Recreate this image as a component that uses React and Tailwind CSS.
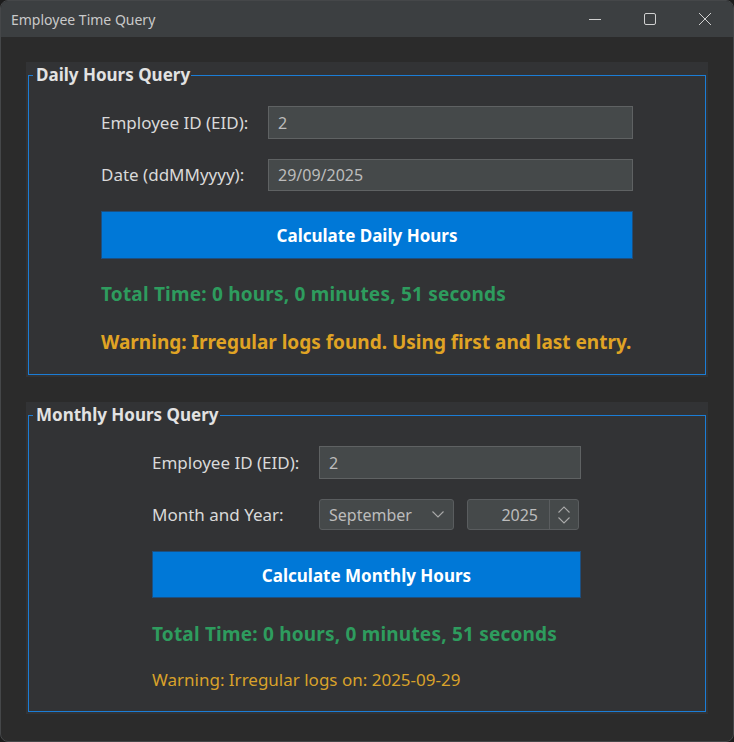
import React from "react";

const font = "font-['Noto_Sans',sans-serif]";

function TextBox({ value, h = "h-[33px]" }) {
  return (
    <div className={`${h} w-full bg-[#45494a] border border-[#5f6263] flex items-center pl-[9px] text-[16px] text-[#bcbcbc]`}>
      {value}
    </div>
  );
}

function Legend({ children }) {
  return (
    <legend className="ml-[4px] pl-[3px] pr-[1px] text-[17px] font-bold leading-[26px] text-[#e2e2e2]">
      {children}
    </legend>
  );
}

function Row({ label, children, className = "" }) {
  return (
    <div className={`grid grid-cols-[167px_1fr] items-center ${className}`}>
      <span className="text-[17px] text-[#d9d9d9]">{label}</span>
      {children}
    </div>
  );
}

function Chevron({ d, className }) {
  return (
    <svg className={className} viewBox="0 0 12 7" fill="none" stroke="#a9a9a9" strokeWidth="1.1">
      <path d={d} />
    </svg>
  );
}

export default function App() {
  return (
    <div className={`w-[734px] h-[742px] bg-[#1c1c1c] ${font}`}>
      <div className="w-full h-full rounded-[8px] overflow-hidden border border-[#454749] bg-[#2b2b2b] flex flex-col">
        {/* Title bar */}
        <div className="h-[36px] shrink-0 bg-[#3c3f41] flex items-center">
          <span className="pl-[10px] text-[14px] text-[#c9c9c9]">Employee Time Query</span>
          <div className="ml-auto flex h-full">
            <div className="w-[55px] h-full flex items-center justify-center">
              <svg width="14" height="14" viewBox="0 0 14 14">
                <path d="M1 7.5h12" stroke="#d0d0d0" strokeWidth="1" />
              </svg>
            </div>
            <div className="w-[55px] h-full flex items-center justify-center">
              <svg width="14" height="14" viewBox="0 0 14 14" fill="none">
                <rect x="1.5" y="1.5" width="11" height="11" rx="1.5" stroke="#d0d0d0" strokeWidth="1" />
              </svg>
            </div>
            <div className="w-[55px] h-full flex items-center justify-center">
              <svg width="14" height="14" viewBox="0 0 14 14" fill="none">
                <path d="M1 1l12 12M13 1L1 13" stroke="#d0d0d0" strokeWidth="1" />
              </svg>
            </div>
            <div className="w-[1px]" />
          </div>
        </div>

        {/* Content */}
        <div className="flex-1 px-[25px] pt-[25px] flex flex-col gap-[25px]">
          {/* Daily panel */}
          <div className="bg-[#323335] px-[2px] pb-[2px]">
            <fieldset className="border border-[#1b7dd6] pb-[20px]">
              <Legend>Daily Hours Query</Legend>
              <div className="w-[532px] ml-[72px] pt-[18px] flex flex-col">
                <Row label="Employee ID (EID):">
                  <TextBox value="2" />
                </Row>
                <Row label="Date (ddMMyyyy):" className="mt-[20px]">
                  <TextBox value="29/09/2025" h="h-[32px]" />
                </Row>
                <div className="mt-[20px] h-[48px] pt-[2px] bg-[#0078d7] border border-[#1d4f7f] flex items-center justify-center text-white font-bold text-[17px]">
                  Calculate Daily Hours
                </div>
                <div className="mt-[23px] h-[24px] flex items-center text-[#2e9c5e] font-bold text-[19px] tracking-[0.2px] whitespace-nowrap">
                  Total Time: 0 hours, 0 minutes, 51 seconds
                </div>
                <div className="mt-[24px] h-[24px] flex items-center text-[#e0a424] font-bold text-[19px] whitespace-nowrap">
                  Warning: Irregular logs found. Using first and last entry.
                </div>
              </div>
            </fieldset>
          </div>

          {/* Monthly panel */}
          <div className="bg-[#323335] px-[2px] pb-[2px]">
            <fieldset className="border border-[#1b7dd6] pb-[19px]">
              <Legend>Monthly Hours Query</Legend>
              <div className="w-[429px] ml-[123px] pt-[18px] flex flex-col">
                <Row label="Employee ID (EID):">
                  <TextBox value="2" />
                </Row>
                <Row label="Month and Year:" className="mt-[20px]">
                  <div className="flex items-center">
                    <div className="w-[135px] h-[31px] bg-[#45494a] border border-[#5a5d5f] rounded-[3px] flex items-center pl-[9px] pr-[9px] text-[16px] text-[#bcbcbc]">
                      <span>September</span>
                      <Chevron d="M0.5 0.5l5.5 5.5 5.5-5.5" className="ml-auto w-[12px] h-[7px]" />
                    </div>
                    <div className="ml-[13px] w-[112px] h-[31px] bg-[#45494a] border border-[#5a5d5f] rounded-[3px] flex items-stretch text-[16px] text-[#bcbcbc]">
                      <div className="flex-1 flex items-center justify-end pr-[11px]">2025</div>
                      <div className="w-[29px] border-l border-[#5a5d5f] flex flex-col items-center justify-center gap-[4px]">
                        <Chevron d="M0.5 6.5l5.5-5.5 5.5 5.5" className="w-[12px] h-[7px]" />
                        <Chevron d="M0.5 0.5l5.5 5.5 5.5-5.5" className="w-[12px] h-[7px]" />
                      </div>
                    </div>
                  </div>
                </Row>
                <div className="mt-[21px] h-[47px] pt-[2px] bg-[#0078d7] border border-[#1d4f7f] flex items-center justify-center text-white font-bold text-[17px]">
                  Calculate Monthly Hours
                </div>
                <div className="mt-[24px] h-[24px] flex items-center text-[#2e9c5e] font-bold text-[19px] tracking-[0.2px] whitespace-nowrap">
                  Total Time: 0 hours, 0 minutes, 51 seconds
                </div>
                <div className="mt-[22px] h-[24px] flex items-center text-[#d9a22a] text-[17px] whitespace-nowrap">
                  Warning: Irregular logs on: 2025-09-29
                </div>
              </div>
            </fieldset>
          </div>
        </div>
      </div>
    </div>
  );
}
